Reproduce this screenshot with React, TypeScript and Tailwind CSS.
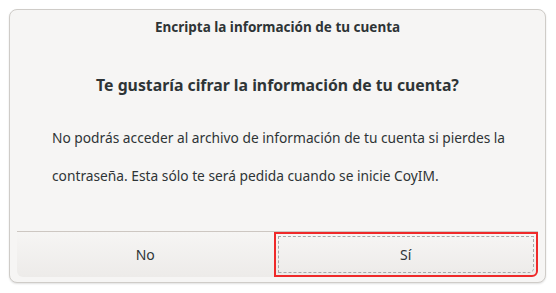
export default function App() {
  return (
    <div className="flex h-[293px] w-[556px] bg-white p-[9px] pb-[10px] pr-[10px] font-['Noto_Sans',sans-serif]">
      <div className="flex flex-1 flex-col rounded-[8px] border border-[#cfccc8] bg-[#f6f5f4] px-[7px] pb-[5px] shadow-[0_1px_2px_rgba(0,0,0,0.12)]">
        <div className="pt-[7px] text-center text-[13.5px] font-bold text-[#2e3436]">
          Encripta la información de tu cuenta
        </div>

        <div className="flex flex-1 flex-col pl-[35px] pr-[20px] pt-[37px]">
          <h1 className="pr-[15px] text-center text-[15.8px] font-bold text-[#2e3436]">
            Te gustaría cifrar la información de tu cuenta?
          </h1>
          <p className="mt-[21px] text-[13.75px] leading-[38px] text-[#2e3436]">
            No podrás acceder al archivo de información de tu cuenta si pierdes la contraseña. Esta sólo te será pedida cuando se inicie CoyIM.
          </p>
        </div>

        {/* Buttons */}
        <div className="flex h-[46px] border-t border-[#cdc7c2]">
          <button className="flex-1 rounded-bl-[6px] bg-gradient-to-b from-[#f6f5f4] to-[#edebe9] text-[14px] text-[#2e3436]">
            No
          </button>
          <button className="flex-1 rounded-br-[6px] border-2 border-[#ef2929] bg-gradient-to-b from-[#f6f5f4] to-[#edebe9] p-[2px] text-[14px] text-[#2e3436]">
            <span className="flex h-full w-full items-center justify-center rounded-br-[5px] border border-dashed border-[#a8a8a8]">
              Sí
            </span>
          </button>
        </div>
      </div>
    </div>
  );
}
